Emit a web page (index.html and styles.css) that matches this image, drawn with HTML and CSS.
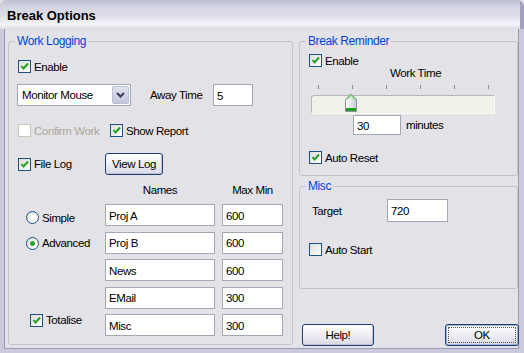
FILE: index.html
```html
<!DOCTYPE html>
<html lang="en">
<head>
  <meta charset="UTF-8">
  <title>Break Options</title>
  <link rel="stylesheet" href="styles.css">
</head>
<body>
  <div class="window">
    <div class="titlebar">Break Options</div>

    <div class="client">
      <!-- Work Logging -->
      <fieldset class="group work">
        <legend>Work Logging</legend>
        <div class="group-body">
          <div class="row enable-row">
            <span class="cb checked"></span><span>Enable</span>
          </div>

          <div class="row away-row">
            <div class="select">
              <span>Monitor Mouse</span>
              <span class="drop">
                <svg width="9" height="6" viewBox="0 0 9 6"><path d="M1 1 L4.5 4.5 L8 1" fill="none" stroke="#3a3a5a" stroke-width="2"/></svg>
              </span>
            </div>
            <span class="away-label">Away Time</span>
            <input class="field away-field" type="text" value="5">
          </div>

          <div class="row confirm-row">
            <div class="item confirm">
              <span class="cb disabled"></span><span class="muted">Confirm Work</span>
            </div>
            <div class="item">
              <span class="cb checked"></span><span>Show Report</span>
            </div>
          </div>

          <div class="row file-row">
            <div class="item filelog">
              <span class="cb checked"></span><span>File Log</span>
            </div>
            <button class="btn view-btn">View Log</button>
          </div>

          <div class="log-grid heads">
            <span></span>
            <span class="head">Names</span>
            <span class="head">Max Min</span>
          </div>

          <div class="log-grid rows">
            <div class="item radio-simple"><span class="radio"></span><span>Simple</span></div>
            <input class="field" type="text" value="Proj A">
            <input class="field" type="text" value="600">

            <div class="item radio-adv"><span class="radio on"></span><span>Advanced</span></div>
            <input class="field" type="text" value="Proj B">
            <input class="field" type="text" value="600">

            <span></span>
            <input class="field" type="text" value="News">
            <input class="field" type="text" value="600">

            <span></span>
            <input class="field" type="text" value="EMail">
            <input class="field" type="text" value="300">

            <div class="item totalise"><span class="cb checked"></span><span>Totalise</span></div>
            <input class="field" type="text" value="Misc">
            <input class="field" type="text" value="300">
          </div>
        </div>
      </fieldset>

      <div class="side">
        <!-- Break Reminder -->
        <fieldset class="group reminder">
          <legend>Break Reminder</legend>
          <div class="group-body">
            <div class="row enable-right">
              <span class="cb checked"></span><span>Enable</span>
            </div>
            <div class="work-time">Work Time</div>
            <div class="ticks">
              <i></i><i></i><i></i><i></i><i></i><i></i>
            </div>
            <div class="track">
              <svg class="thumb" width="12" height="20" viewBox="0 0 12 20">
                <defs>
                  <linearGradient id="tg" x1="0" y1="0" x2="1" y2="0">
                    <stop offset="0" stop-color="#ffffff"/>
                    <stop offset="1" stop-color="#c9c9d6"/>
                  </linearGradient>
                </defs>
                <path d="M0.5 6.5 L6 0.8 L11.5 6.5 L11.5 18.5 L0.5 18.5 Z" fill="url(#tg)" stroke="#8d8da6"/>
                <path d="M1.5 6.5 L6 1.8 L10.5 6.5" fill="none" stroke="#6fce6f" stroke-width="1.2"/>
                <rect x="1" y="15" width="10" height="3" fill="#21a121"/>
              </svg>
            </div>
            <div class="row minutes-row">
              <input class="field minutes-field" type="text" value="30">
              <span>minutes</span>
            </div>
            <div class="row auto-reset">
              <span class="cb checked"></span><span>Auto Reset</span>
            </div>
          </div>
        </fieldset>

        <!-- Misc -->
        <fieldset class="group misc">
          <legend>Misc</legend>
          <div class="group-body">
            <div class="row target-row">
              <span class="target-label">Target</span>
              <input class="field target-field" type="text" value="720">
            </div>
            <div class="row auto-start">
              <span class="cb"></span><span>Auto Start</span>
            </div>
          </div>
        </fieldset>

        <div class="buttons">
          <button class="btn help-btn">Help!</button>
          <button class="btn ok-btn"><span class="focus">OK</span></button>
        </div>
      </div>
    </div>
  </div>
</body>
</html>
```

FILE: styles.css
```css
* {
  box-sizing: border-box;
}
html, body {
  margin: 0;
  padding: 0;
}
body {
  width: 524px;
  height: 353px;
  overflow: hidden;
  background: #e3e2e7;
  font-family: "Liberation Sans", Arial, sans-serif;
  font-size: 11.5px;
  letter-spacing: -0.4px;
  white-space: nowrap;
  color: #000;
}
.window {
  width: 524px;
  height: 353px;
  display: flex;
  flex-direction: column;
  background: #c9c9db;
  border-radius: 7px 7px 0 0;
  overflow: hidden;
}
.titlebar {
  height: 29px;
  flex: none;
  padding: 0 0 0 7px;
  line-height: 31px;
  font-weight: bold;
  font-size: 13px;
  letter-spacing: 0;
  background: linear-gradient(to bottom, #bdbdd2 0, #d5d5e3 25%, #dedee9 55%, #f4f4f8 85%, #d8d8e4 100%);
  border-right: 4px solid #a2a2bd;
}
.client {
  flex: 1;
  display: grid;
  grid-template-columns: 285px 219px;
  column-gap: 6px;
  align-items: start;
  padding: 5px 0 0 4px;
  background: #e3e2e7;
  border-left: 4px solid #cacadc;
  border-right: 5px solid #cacadc;
  border-bottom: 4px solid #cacadc;
  box-shadow: inset 1px 0 0 #9a9ab6, inset -1px -1px 0 #9a9ab6;
}

/* group boxes */
.group {
  margin: 0;
  padding: 0;
  min-width: 0;
  border: 1px solid #c3c2c8;
  border-radius: 3px;
}
.group legend {
  margin-left: 6px;
  padding: 0 2px;
  line-height: 15px;
  font-size: 12px;
  color: #0046d5;
}
.group-body {
  padding: 0 0 0 9px;
}
.row {
  display: flex;
  align-items: center;
}
.item {
  display: flex;
  align-items: center;
}
.muted {
  color: #aca899;
}

/* checkbox / radio */
.cb {
  width: 13px;
  height: 13px;
  flex: none;
  margin-right: 3px;
  border: 1px solid #1c5180;
  background: linear-gradient(135deg, #dcdcd7, #ffffff);
}
.cb.checked {
  background: url("data:image/svg+xml;utf8,<svg xmlns='http://www.w3.org/2000/svg' width='11' height='11'><path d='M2.5 5 L4.5 7.5 L9 2.5' fill='none' stroke='%2321a121' stroke-width='2'/></svg>") center no-repeat, linear-gradient(135deg, #dcdcd7, #ffffff);
}
.cb.disabled {
  border-color: #cac8bb;
  background: #fff;
}
.radio {
  width: 13px;
  height: 13px;
  flex: none;
  margin-right: 3px;
  border: 1px solid #1c5180;
  border-radius: 50%;
  background: radial-gradient(circle at 65% 65%, #ffffff 30%, #d4d4d0 100%);
  position: relative;
}
.radio.on::after {
  content: "";
  position: absolute;
  left: 3px;
  top: 3px;
  width: 5px;
  height: 5px;
  border-radius: 50%;
  background: #2ea52e;
}

/* text fields */
.field {
  height: 22px;
  margin: 0;
  padding: 1px 3px 0;
  border: 1px solid #a3a8b4;
  background: #fff;
  font: inherit;
  letter-spacing: inherit;
  line-height: 16px;
  color: #000;
  outline: none;
  display: block;
}

/* buttons */
.btn {
  height: 22px;
  margin: 0;
  padding: 0;
  font: inherit;
  letter-spacing: inherit;
  color: #000;
  border: 1px solid #1e3e72;
  border-radius: 3px;
  background: linear-gradient(to bottom, #ffffff 0, #f2f2f6 40%, #d9d9e4 100%);
  box-shadow: inset -1px -1px 0 #c2c2d4;
}

/* work logging */
.enable-row {
  margin-top: 11px;
  height: 13px;
}
.away-row {
  margin-top: 11px;
  height: 22px;
}
.select {
  width: 114px;
  height: 22px;
  margin-left: -1px;
  padding: 0 1px 0 4px;
  display: flex;
  align-items: center;
  justify-content: space-between;
  border: 1px solid #a3a8b4;
  background: #fff;
}
.drop {
  width: 17px;
  height: 18px;
  display: flex;
  align-items: center;
  justify-content: center;
  border: 1px solid #b8bfd8;
  border-radius: 2px;
  background: linear-gradient(to bottom, #e0e2ee, #c3c7dc);
}
.away-label {
  width: 63px;
  margin-left: 19px;
}
.away-field {
  width: 40px;
}
.confirm-row {
  margin-top: 18px;
  height: 13px;
}
.confirm {
  width: 92px;
}
.file-row {
  margin-top: 16px;
  height: 22px;
}
.filelog {
  width: 87px;
}
.view-btn {
  width: 58px;
}
.log-grid {
  display: grid;
  grid-template-columns: 80px 110px 61px;
  column-gap: 7px;
}
.heads {
  margin-top: 8px;
  line-height: 15px;
}
.head {
  text-align: center;
}
.rows {
  margin-top: 6px;
  grid-auto-rows: 22px;
  row-gap: 5.5px;
  padding-bottom: 8px;
  align-items: center;
}
.radio-simple {
  margin-left: 8px;
  margin-top: 5px;
}
.radio-adv {
  margin-left: 8px;
  margin-top: 1px;
}
.totalise {
  margin-left: 12px;
  margin-top: -10px;
}

/* right column */
.side {
  display: flex;
  flex-direction: column;
}
.enable-right {
  margin-top: 5px;
  height: 13px;
}
.work-time {
  height: 12px;
  line-height: 12px;
  padding-left: 81px;
}
.ticks {
  margin: 6px 0 0 9px;
  width: 171px;
  height: 4px;
  display: flex;
  justify-content: space-between;
}
.ticks i {
  width: 1px;
  height: 4px;
  background: #8a8a8a;
}
.track {
  position: relative;
  margin: 6px 0 0 2px;
  width: 184px;
  height: 19px;
  border: 1px solid #b9b9b4;
  border-right-color: #fafaf6;
  border-bottom-color: #fafaf6;
  border-radius: 3px 0 0 3px;
  background: #f1f0e9;
}
.thumb {
  position: absolute;
  left: 33px;
  top: -3px;
}
.minutes-row {
  margin-top: 1px;
  height: 20px;
}
.minutes-field {
  width: 48px;
  height: 20px;
  margin-left: 44px;
  margin-right: 5px;
}
.auto-reset {
  margin-top: 16px;
  height: 13px;
}
.reminder .group-body {
  padding-bottom: 11px;
}
.misc {
  margin-top: 3px;
}
.target-row {
  margin-top: 5px;
  height: 23px;
}
.target-label {
  width: 75px;
  margin-left: 3px;
}
.target-field {
  width: 61px;
  height: 23px;
}
.auto-start {
  margin-top: 21px;
  height: 13px;
}
.misc .group-body {
  padding-bottom: 32px;
}
.buttons {
  margin: 35px -1px 0 3px;
  display: flex;
  justify-content: space-between;
}
.help-btn {
  width: 72px;
}
.ok-btn {
  width: 74px;
  border-color: #1e3e72;
  box-shadow: inset 0 0 0 1px #9fb3da;
  padding: 2px;
}
.ok-btn .focus {
  display: block;
  height: 16px;
  line-height: 14px;
  border: 1px dotted #555;
}
```
